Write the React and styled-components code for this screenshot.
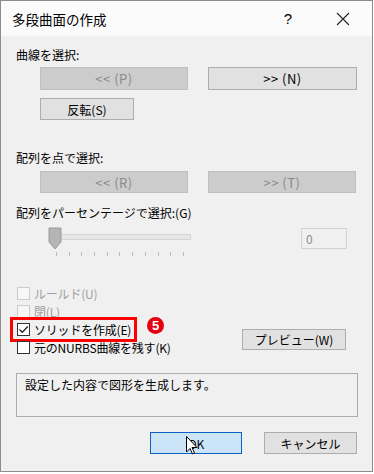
import React from 'react';
import styled, { createGlobalStyle } from 'styled-components';

const Global = createGlobalStyle`
  html, body { margin: 0; padding: 0; background: #ffffff; }
  body { font-family: "Noto Sans CJK JP", "Noto Sans", sans-serif; }
`;

const Window = styled.div`
  width: 373px;
  height: 472px;
  box-sizing: border-box;
  border: 1px solid #8c8c8c;
  display: flex;
  flex-direction: column;
  background: #f0f0f0;
`;

const TitleBar = styled.div`
  height: 35px;
  background: #fbfbfb;
  display: flex;
  align-items: center;
  padding-left: 11px;
  font-size: 13.5px;
  color: #000;
`;

const TitleText = styled.div`
  flex: 1;
`;

const Help = styled.div`
  width: 20px;
  text-align: center;
  font-size: 15px;
  font-family: "Liberation Sans", sans-serif;
  margin-right: 38px;
`;

const Close = styled.div`
  width: 14px;
  height: 14px;
  margin-right: 22px;
  display: flex;
`;

const Body = styled.div`
  flex: 1;
  padding: 0 15px;
  display: flex;
  flex-direction: column;
`;

const Label = styled.div`
  font-size: 12px;
  line-height: 16px;
  margin-top: ${p => p.$mt}px;
  color: #000;
`;

const ButtonRow = styled.div`
  display: flex;
  gap: 20px;
  margin-left: 24px;
  margin-top: ${p => p.$mt}px;
`;

const Button = styled.div`
  width: ${p => p.$w}px;
  height: ${p => p.$h || 23}px;
  box-sizing: border-box;
  border: 1px solid ${p => (p.$disabled ? '#bfbfbf' : p.$primary ? '#0a63c4' : '#adadad')};
  background: ${p => (p.$disabled ? '#cccccc' : p.$primary ? '#cce4f7' : '#e1e1e1')};
  color: ${p => (p.$disabled ? '#8a8a8a' : '#000')};
  font-size: ${p => p.$fs || 12}px;
  letter-spacing: ${p => (p.$fs ? '0.5px' : '0')};
  display: flex;
  align-items: center;
  justify-content: center;
  position: relative;
  margin-left: ${p => p.$ml || 0}px;
  margin-top: ${p => p.$mt || 0}px;
`;

const SliderRow = styled.div`
  display: flex;
  align-items: flex-start;
  margin-top: 6px;
  height: 29px;
`;

const Slider = styled.div`
  position: relative;
  margin-left: 32px;
  width: 143px;
  height: 29px;
`;

const Track = styled.div`
  position: absolute;
  left: 2px;
  right: 0;
  top: 7px;
  height: 4px;
  background: #e7e7e7;
  border: 1px solid #d6d6d6;
`;

const Thumb = styled.svg`
  position: absolute;
  left: 0;
  top: 0;
`;

const Ticks = styled.div`
  position: absolute;
  left: 8px;
  top: 25px;
  width: 128px;
  display: flex;
  justify-content: space-between;
`;

const Tick = styled.span`
  width: 1px;
  height: 4px;
  background: #bcbcbc;
`;

const NumberBox = styled.div`
  margin-left: auto;
  margin-right: 10px;
  margin-top: 1px;
  width: 46px;
  height: 21px;
  box-sizing: border-box;
  border: 1px solid #d2d2d2;
  background: #f0f0f0;
  color: #8c8c8c;
  font-size: 12px;
  line-height: 19px;
  padding-left: 4px;
`;

const OptionArea = styled.div`
  display: flex;
  margin-top: 28px;
`;

const Checks = styled.div`
  display: flex;
  flex-direction: column;
  flex: 1;
`;

const CheckRow = styled.div`
  position: relative;
  height: 18px;
  display: flex;
  align-items: center;
  font-size: 12px;
  letter-spacing: -0.2px;
  color: ${p => (p.$disabled ? '#a0a0a0' : '#000')};
`;

const Box = styled.span`
  width: 13px;
  height: 13px;
  box-sizing: border-box;
  margin-left: 1px;
  margin-right: 4px;
  border: 1px solid ${p => (p.$disabled ? '#cccccc' : '#333333')};
  background: ${p => (p.$disabled ? '#f7f7f7' : '#ffffff')};
  display: flex;
  align-items: center;
  justify-content: center;
`;

const Highlight = styled.div`
  position: absolute;
  left: -6px;
  top: -3px;
  width: 127px;
  height: 25px;
  box-sizing: border-box;
  border: 3px solid #ff0000;
`;

const Badge = styled.div`
  position: absolute;
  left: 131px;
  top: -3px;
  width: 17px;
  height: 17px;
  border-radius: 50%;
  background: #e60012;
  color: #fff;
  font-family: "Liberation Sans", sans-serif;
  font-weight: bold;
  font-size: 13px;
  display: flex;
  align-items: center;
  justify-content: center;
`;

const PreviewWrap = styled.div`
  align-self: flex-end;
  margin-bottom: 6px;
  margin-right: 11px;
`;

const Message = styled.div`
  margin-top: 17px;
  height: 44px;
  box-sizing: border-box;
  border: 1px solid #adadad;
  padding: 3px 0 0 8px;
  font-size: 12px;
  line-height: 16px;
  color: #000;
  margin-right: -1px;
`;

const Footer = styled.div`
  display: flex;
  justify-content: flex-end;
  gap: 22px;
  margin-top: 15px;
`;

const Cursor = styled.svg`
  position: absolute;
  left: 35px;
  top: 3px;
`;

const Check = () => (
  <svg width="11" height="11" viewBox="0 0 11 11">
    <path d="M1.5 5.5 L4.3 8.3 L9.8 2.5" stroke="#222" strokeWidth="1.3" fill="none" />
  </svg>
);

export default function App() {
  return (
    <>
      <Global />
      <Window>
        <TitleBar>
          <TitleText>多段曲面の作成</TitleText>
          <Help>?</Help>
          <Close>
            <svg width="14" height="14" viewBox="0 0 14 14">
              <path d="M1 1 L13 13 M13 1 L1 13" stroke="#222" strokeWidth="1.1" />
            </svg>
          </Close>
        </TitleBar>
        <Body>
          <Label $mt={11}>曲線を選択:</Label>
          <ButtonRow $mt={4}>
            <Button $w={148} $fs={13} $disabled>&lt;&lt; (P)</Button>
            <Button $w={149} $fs={13}>&gt;&gt; (N)</Button>
          </ButtonRow>
          <Button $w={94} $h={22} $ml={24} $mt={8}>反転(S)</Button>
          <Label $mt={30}>配列を点で選択:</Label>
          <ButtonRow $mt={5}>
            <Button $w={148} $h={22} $fs={13} $disabled>&lt;&lt; (R)</Button>
            <Button $w={148} $h={22} $fs={13} $disabled>&gt;&gt; (T)</Button>
          </ButtonRow>
          <Label $mt={12}>配列をパーセンテージで選択:(G)</Label>
          <SliderRow>
            <Slider>
              <Track />
              <Thumb width="14" height="23" viewBox="0 0 14 23">
                <path d="M1 1 H13 V15 L7 22 L1 15 Z" fill="#b5b5b5" stroke="#9a9a9a" />
              </Thumb>
              <Ticks>
                {Array.from({ length: 11 }).map((_, i) => (
                  <Tick key={i} />
                ))}
              </Ticks>
            </Slider>
            <NumberBox>0</NumberBox>
          </SliderRow>
          <OptionArea>
            <Checks>
              <CheckRow $disabled>
                <Box $disabled />
                ルールド(U)
              </CheckRow>
              <CheckRow $disabled>
                <Box $disabled />
                閉(L)
              </CheckRow>
              <CheckRow>
                <Box>
                  <Check />
                </Box>
                ソリッドを作成(E)
                <Highlight />
                <Badge>5</Badge>
              </CheckRow>
              <CheckRow>
                <Box />
                元のNURBS曲線を残す(K)
              </CheckRow>
            </Checks>
            <PreviewWrap>
              <Button $w={104} $h={21}>プレビュー(W)</Button>
            </PreviewWrap>
          </OptionArea>
          <Message>設定した内容で図形を生成します。</Message>
          <Footer>
            <Button $w={92} $h={22} $primary>
              OK
              <Cursor width="12" height="19" viewBox="0 0 12 19">
                <path d="M0.5 0.5 V16 L4 12.5 L6.5 18 L8.5 17 L6 11.5 H11 Z" fill="#fff" stroke="#000" strokeWidth="1" />
              </Cursor>
            </Button>
            <Button $w={93} $h={22}>キャンセル</Button>
          </Footer>
        </Body>
      </Window>
    </>
  );
}
